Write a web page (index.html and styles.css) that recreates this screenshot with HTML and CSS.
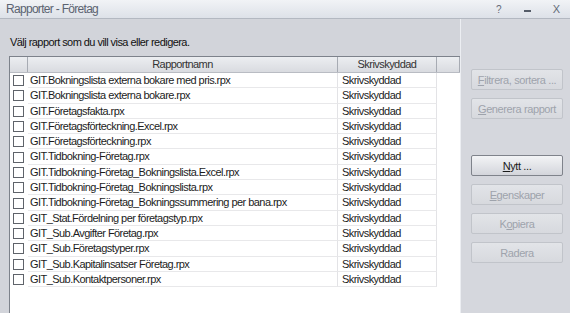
FILE: index.html
```html
<!DOCTYPE html>
<html lang="sv">

<head>
    <meta charset="UTF-8">
    <title>Rapporter - Företag</title>
    <link rel="stylesheet" href="styles.css">
</head>

<body>
    <div class="window">
        <header class="titlebar">
            <span class="title">Rapporter - Företag</span>
            <span class="caption-buttons">
                <span class="cap help">?</span>
                <span class="cap minimize"></span>
                <span class="cap close">X</span>
            </span>
        </header>

        <div class="content">
            <main class="main">
                <p class="intro">Välj rapport som du vill visa eller redigera.</p>

                <div class="grid">
                    <div class="grid-row grid-head">
                        <div class="cell check"></div>
                        <div class="cell name">Rapportnamn</div>
                        <div class="cell prot">Skrivskyddad</div>
                        <div class="cell fill"></div>
                    </div>
                    <div id="rows"></div>
                </div>
            </main>

            <aside class="side">
                <button class="btn" disabled><u>F</u>iltrera, sortera ...</button>
                <button class="btn" disabled><u>G</u>enerera rapport</button>
                <button class="btn btn-main"><u>N</u>ytt ...</button>
                <button class="btn" disabled><u>E</u>genskaper</button>
                <button class="btn" disabled>K<u>o</u>piera</button>
                <button class="btn" disabled>Radera</button>
            </aside>
        </div>
    </div>

    <script>
        const reports = [
            'GIT.Bokningslista externa bokare med pris.rpx',
            'GIT.Bokningslista externa bokare.rpx',
            'GIT.Företagsfakta.rpx',
            'GIT.Företagsförteckning.Excel.rpx',
            'GIT.Företagsförteckning.rpx',
            'GIT.Tidbokning-Företag.rpx',
            'GIT.Tidbokning-Företag_Bokningslista.Excel.rpx',
            'GIT.Tidbokning-Företag_Bokningslista.rpx',
            'GIT.Tidbokning-Företag_Bokningssummering per bana.rpx',
            'GIT_Stat.Fördelning per företagstyp.rpx',
            'GIT_Sub.Avgifter Företag.rpx',
            'GIT_Sub.Företagstyper.rpx',
            'GIT_Sub.Kapitalinsatser Företag.rpx',
            'GIT_Sub.Kontaktpersoner.rpx'
        ];

        const rows = document.getElementById('rows');

        reports.forEach(name => {
            const row = document.createElement('div');
            row.className = 'grid-row';
            row.innerHTML =
                '<div class="cell check"><span class="box"></span></div>' +
                '<div class="cell name"></div>' +
                '<div class="cell prot">Skrivskyddad</div>';
            row.querySelector('.name').textContent = name;
            rows.appendChild(row);
        });
    </script>
</body>

</html>
```

FILE: styles.css
```css
body {
    margin: 0;
    padding: 0;
    font-family: "Liberation Sans", Arial, sans-serif;
    font-size: 11px;
    letter-spacing: -0.55px;
    color: #1c1c1c;
    background-color: #d2d4da;
}

.window {
    width: 570px;
    height: 313px;
    overflow: hidden;
    display: flex;
    flex-direction: column;
    background-color: #d2d4da;
}

.titlebar {
    height: 19px;
    box-sizing: border-box;
    display: flex;
    align-items: center;
    justify-content: space-between;
    padding: 0 6px;
    background: linear-gradient(#f1f3f6, #dde1e8);
    border-bottom: 1px solid #b3b8c1;
}

.title {
    font-size: 12px;
    letter-spacing: -0.7px;
    color: #5b6371;
}

.caption-buttons {
    display: flex;
    align-items: center;
    gap: 22px;
    padding-right: 4px;
    color: #646b78;
    letter-spacing: 0;
}

.cap.help {
    font-size: 10px;
}

.cap.minimize {
    width: 7px;
    height: 2px;
    margin-top: 4px;
    background-color: #555c68;
}

.cap.close {
    font-size: 11px;
}

.content {
    flex: 1;
    display: flex;
}

.main {
    width: 460px;
    box-sizing: border-box;
    padding: 16px 0 0 9px;
    display: flex;
    flex-direction: column;
}

.intro {
    margin: 0 0 7px 1px;
    line-height: 14px;
    color: #111;
}

.grid {
    flex: 1;
    background-color: #fff;
    border-left: 1px solid #7d828b;
    border-top: 1px solid #7d828b;
}

.grid-row {
    display: flex;
    height: 15.3px;
}

.cell {
    box-sizing: border-box;
    line-height: 15px;
    white-space: nowrap;
    overflow: hidden;
}

.check {
    width: 18px;
    padding-left: 3px;
    display: flex;
    align-items: center;
}

.name {
    width: 310px;
    padding-left: 2px;
    border-bottom: 1px solid #e8e8ea;
    border-right: 1px solid #e3e3e6;
}

.prot {
    width: 99px;
    padding-left: 4px;
    border-bottom: 1px solid #e8e8ea;
    border-right: 1px solid #e3e3e6;
}

.fill {
    flex: 1;
}

.grid-head {
    height: 15px;
    background: linear-gradient(#eceef1, #d9dbe0);
    border-bottom: 1px solid #b9bcc3;
    color: #333;
}

.grid-head .cell {
    text-align: center;
    padding-left: 0;
    border-bottom: none;
    border-right: 1px solid #a7abb3;
    line-height: 14px;
}

.box {
    width: 11px;
    height: 11px;
    box-sizing: border-box;
    border: 1px solid #5f636a;
    background-color: #fff;
}

.side {
    width: 110px;
    box-sizing: border-box;
    border-left: 1px solid #eceef2;
    padding: 50px 0 0 10px;
    display: flex;
    flex-direction: column;
    gap: 8px;
    background-color: #d5d7dd;
}

.btn {
    width: 92px;
    height: 21px;
    padding: 0;
    font-family: inherit;
    font-size: 11px;
    letter-spacing: -0.4px;
    color: #9ea3ac;
    background: linear-gradient(#e2e4e8, #d7d9de);
    border: 1px solid #c1c4ca;
    border-radius: 2px;
}

.btn:nth-child(3) {
    margin-top: 28px;
}

.btn-main {
    color: #1a1a1a;
    background: linear-gradient(#f3f4f6, #d3d5db);
    border: 1px solid #7f838b;
}
```
